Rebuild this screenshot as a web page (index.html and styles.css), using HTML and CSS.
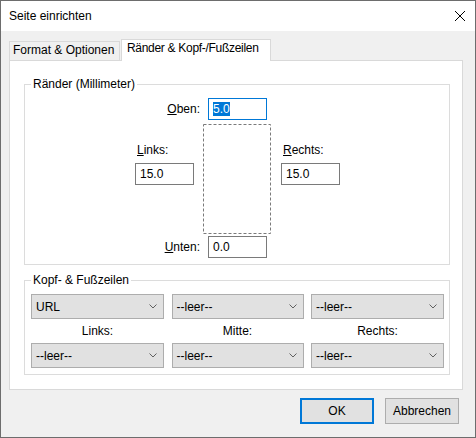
FILE: index.html
```html
<!DOCTYPE html>
<html lang="de">
<head>
<meta charset="utf-8">
<title>Seite einrichten</title>
<link rel="stylesheet" href="styles.css">
</head>
<body>
<div class="window">
  <div class="titlebar">
    <span class="title">Seite einrichten</span>
    <svg class="close" width="10" height="10" viewBox="0 0 10 10"><path d="M0 0L10 10M10 0L0 10" stroke="#000" stroke-width="1"/></svg>
  </div>
  <div class="content">
    <div class="tabs">
      <div class="tab">Format &amp; Optionen</div>
      <div class="tab active">Ränder &amp; Kopf-/Fußzeilen</div>
    </div>
    <div class="panel">
      <fieldset class="group">
        <legend>Ränder (Millimeter)</legend>
        <div class="mgrid">
          <span class="lbl top-lbl"><u>O</u>ben:</span>
          <div class="inp focus top-inp"><span class="sel">5.0</span></div>
          <div class="side left-side">
            <span class="side-lbl"><u>L</u>inks:</span>
            <div class="inp">15.0</div>
          </div>
          <svg class="page" width="68" height="110" viewBox="0 0 68 110"><rect x="0.5" y="0.5" width="67" height="109" fill="none" stroke="#7a7a7a" stroke-width="1" stroke-dasharray="3 2"/></svg>
          <div class="side right-side">
            <span class="side-lbl"><u>R</u>echts:</span>
            <div class="inp">15.0</div>
          </div>
          <span class="lbl bottom-lbl"><u>U</u>nten:</span>
          <div class="inp bottom-inp">0.0</div>
        </div>
      </fieldset>
      <fieldset class="group hf">
        <legend>Kopf- &amp; Fußzeilen</legend>
        <div class="hgrid">
          <div class="combo"><span>URL</span><svg width="8" height="5" viewBox="0 0 8 5"><path d="M0.5 0.5L4 4L7.5 0.5" fill="none" stroke="#606060" stroke-width="1"/></svg></div>
          <div class="combo"><span>--leer--</span><svg width="8" height="5" viewBox="0 0 8 5"><path d="M0.5 0.5L4 4L7.5 0.5" fill="none" stroke="#606060" stroke-width="1"/></svg></div>
          <div class="combo"><span>--leer--</span><svg width="8" height="5" viewBox="0 0 8 5"><path d="M0.5 0.5L4 4L7.5 0.5" fill="none" stroke="#606060" stroke-width="1"/></svg></div>
          <div class="hlbl">Links:</div>
          <div class="hlbl">Mitte:</div>
          <div class="hlbl">Rechts:</div>
          <div class="combo"><span>--leer--</span><svg width="8" height="5" viewBox="0 0 8 5"><path d="M0.5 0.5L4 4L7.5 0.5" fill="none" stroke="#606060" stroke-width="1"/></svg></div>
          <div class="combo"><span>--leer--</span><svg width="8" height="5" viewBox="0 0 8 5"><path d="M0.5 0.5L4 4L7.5 0.5" fill="none" stroke="#606060" stroke-width="1"/></svg></div>
          <div class="combo"><span>--leer--</span><svg width="8" height="5" viewBox="0 0 8 5"><path d="M0.5 0.5L4 4L7.5 0.5" fill="none" stroke="#606060" stroke-width="1"/></svg></div>
        </div>
      </fieldset>
    </div>
    <div class="buttons">
      <div class="btn default">OK</div>
      <div class="btn">Abbrechen</div>
    </div>
  </div>
</div>
</body>
</html>
```
FILE: styles.css
```css
html, body {
  margin: 0;
  padding: 0;
  background: #ffffff;
}
body {
  font-family: "Liberation Sans", Arial, sans-serif;
  font-size: 12px;
  color: #000;
}
.window {
  width: 476px;
  height: 438px;
  box-sizing: border-box;
  border: 1px solid #6d6d6d;
  display: flex;
  flex-direction: column;
  background: #f0f0f0;
}
.titlebar {
  height: 30px;
  background: #fff;
  display: flex;
  align-items: center;
  justify-content: space-between;
  padding: 0 10px 0 8px;
  line-height: 30px;
}
.close {
  display: block;
}
.content {
  flex: 1;
  background: #f0f0f0;
  padding: 8px 0 0 8px;
}
.tabs {
  display: flex;
  align-items: flex-end;
  height: 21px;
}
.tab {
  box-sizing: border-box;
  border: 1px solid #d9d9d9;
  border-bottom: none;
  line-height: 15px;
  white-space: nowrap;
}
.tab:first-child {
  width: 111px;
  height: 19px;
  padding: 1px 0 0 3px;
  margin-right: 1px;
  background: #f0f0f0;
}
.tab.active {
  width: 150px;
  height: 22px;
  padding: 1px 0 0 5px;
  margin-bottom: -1px;
  background: #fff;
  position: relative;
  z-index: 1;
  letter-spacing: -0.3px;
}
.panel {
  width: 454px;
  height: 330px;
  box-sizing: border-box;
  background: #fff;
  border: 1px solid #d9d9d9;
  padding: 16px 12px 0 14px;
}
.group {
  margin: 0;
  padding: 6px 5px 6px 6px;
  border: 1px solid #dcdcdc;
  min-width: 0;
}
.group legend {
  margin-left: 0;
  padding: 0 2px;
  line-height: 15px;
}
.group.hf {
  margin-top: 8px;
}
.mgrid {
  display: grid;
  grid-template-columns: 59px 9px 68px 10px 59px;
  grid-template-rows: 22px auto 22px;
  margin-left: 104px;
}
.lbl {
  grid-column: 1 / 3;
  justify-self: end;
  align-self: center;
  margin-right: 3px;
  line-height: 15px;
}
.top-lbl { grid-row: 1; }
.bottom-lbl { grid-row: 3; }
.top-inp, .bottom-inp {
  grid-column: 3;
  justify-self: end;
  margin-right: 4px;
}
.top-inp { grid-row: 1; }
.bottom-inp { grid-row: 3; }
.inp {
  width: 59px;
  height: 22px;
  box-sizing: border-box;
  border: 1px solid #7a7a7a;
  background: #fff;
  padding-left: 4px;
  line-height: 20px;
}
.inp.focus {
  border-color: #0078d7;
}
.sel {
  background: #0078d7;
  color: #fff;
}
.side {
  grid-row: 2;
  align-self: start;
  padding-top: 23px;
}
.left-side { grid-column: 1; }
.right-side { grid-column: 5; }
.side-lbl {
  display: block;
  padding-left: 2px;
  line-height: 15px;
  margin-bottom: 5px;
}
.page {
  grid-row: 2;
  grid-column: 3;
  display: block;
  margin: 4px 0 2px;
}
.hgrid {
  display: grid;
  grid-template-columns: 133px 132px 133px;
  column-gap: 7.5px;
  grid-template-rows: 25px 24px 25px;
}
.combo {
  box-sizing: border-box;
  border: 1px solid #adadad;
  background: #e1e1e1;
  display: flex;
  align-items: center;
  justify-content: space-between;
  padding: 0 6px 0 4px;
}
.combo svg {
  display: block;
}
.hlbl {
  text-align: center;
  line-height: 24px;
}
.buttons {
  display: flex;
  justify-content: flex-end;
  gap: 11px;
  padding: 8px 16px 0 0;
}
.btn {
  width: 74px;
  height: 26px;
  box-sizing: border-box;
  border: 1px solid #adadad;
  background: #e1e1e1;
  text-align: center;
  line-height: 24px;
}
.btn.default {
  border: 2px solid #0078d7;
  line-height: 22px;
}
```
